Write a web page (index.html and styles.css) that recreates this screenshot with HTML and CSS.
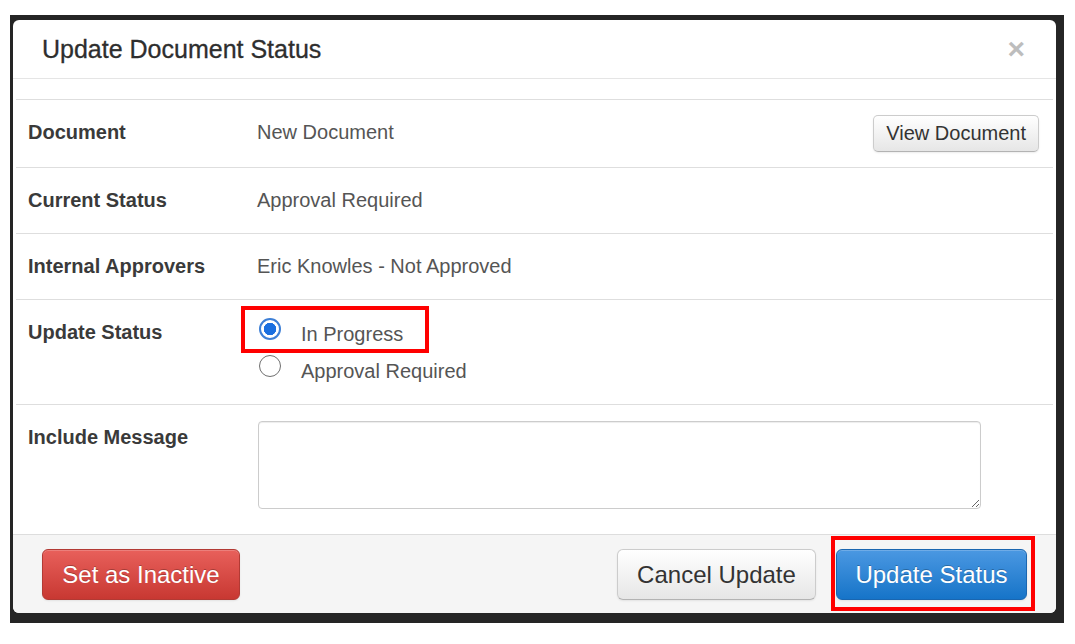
FILE: index.html
```html
<!DOCTYPE html>
<html lang="en">
<head>
<meta charset="utf-8">
<title>Update Document Status</title>
<link rel="stylesheet" href="styles.css">
</head>
<body>
<div class="frame">
  <div class="modal">
    <div class="modal-header">
      <h3 class="modal-title">Update Document Status</h3>
      <span class="close">&times;</span>
    </div>
    <div class="modal-body">
      <div class="row">
        <div class="label">Document</div>
        <div class="value">New Document</div>
        <button class="btn btn-view">View Document</button>
      </div>
      <div class="row">
        <div class="label">Current Status</div>
        <div class="value">Approval Required</div>
      </div>
      <div class="row">
        <div class="label">Internal Approvers</div>
        <div class="value">Eric Knowles - Not Approved</div>
      </div>
      <div class="row row-radio">
        <div class="label">Update Status</div>
        <div class="radios">
          <label class="radio highlight-radio"><input type="radio" name="status" checked><span>In Progress</span></label>
          <label class="radio"><input type="radio" name="status"><span>Approval Required</span></label>
        </div>
      </div>
      <div class="row">
        <div class="label">Include Message</div>
        <textarea class="message"></textarea>
      </div>
    </div>
    <div class="modal-footer">
      <button class="btn btn-large btn-danger">Set as Inactive</button>
      <button class="btn btn-large btn-default btn-cancel">Cancel Update</button>
      <div class="highlight-btn">
        <button class="btn btn-large btn-primary">Update Status</button>
      </div>
    </div>
  </div>
</div>
</body>
</html>
```

FILE: styles.css
```css
*, *::before, *::after { box-sizing: border-box; }

body {
  margin: 0;
  background: #fff;
  font-family: "Liberation Sans", Arial, sans-serif;
  font-size: 20px;
  color: #333;
}

.frame {
  width: 1054px;
  margin: 15px 0 0 10px;
  padding: 5px 8px 10px 3px;
  background: #252525;
}

.modal {
  width: 1043px;
  height: 593px;
  background: #fff;
  border-radius: 6px;
  overflow: hidden;
  display: flex;
  flex-direction: column;
}

.modal-header {
  height: 59px;
  flex: none;
  border-bottom: 1px solid #e5e5e5;
  display: flex;
  align-items: center;
  justify-content: space-between;
  padding: 0 31px 0 29px;
}

.modal-title {
  margin: 0;
  font-size: 25px;
  font-weight: normal;
  line-height: 30px;
  color: #2e2e2e;
  -webkit-text-stroke: 0.3px #2e2e2e;
}

.close {
  font-size: 30px;
  font-weight: bold;
  line-height: 1;
  color: #bdbdbd;
}

.modal-body {
  flex: 1;
  padding: 20px 3px 0;
}

.row {
  display: flex;
  align-items: flex-start;
  border-top: 1px solid #dedede;
  padding: 15px 14px 15px 12px;
}

.label {
  width: 229px;
  flex: none;
  font-weight: bold;
  line-height: 28px;
  margin: 3px 0 4px;
  color: #3a3a3a;
}

.value {
  flex: 1;
  line-height: 28px;
  margin: 3px 0 4px;
  color: #555;
}

.row-radio { padding-bottom: 15px; }

.radios {
  display: flex;
  flex-direction: column;
}

.radio {
  position: relative;
  display: flex;
  align-items: flex-start;
  height: 37px;
  color: #555;
}

.radio input {
  appearance: none;
  -webkit-appearance: none;
  width: 22px;
  height: 22px;
  margin: 3px 0 0 2px;
  border: 1.5px solid #6f6f6f;
  border-radius: 50%;
  background: #fff;
  flex: none;
}

.radio input:checked {
  border: 2px solid #3d7fd6;
  background: radial-gradient(circle, #1a6fe0 0 6px, #fff 6.5px);
}

.radio span {
  margin: 5px 0 0 20px;
  line-height: 28px;
}

.highlight-radio::after {
  content: "";
  position: absolute;
  left: -16px;
  top: -9px;
  width: 188px;
  height: 47px;
  border: 4px solid #f00;
}

.message {
  width: 723px;
  height: 88px;
  margin: 1px 0 0 1px;
  border: 1px solid #ccc;
  border-radius: 4px;
  box-shadow: inset 0 1px 1px rgba(0,0,0,.075);
  font-family: inherit;
  font-size: 20px;
  resize: both;
}

.btn {
  font-family: inherit;
  font-size: 20px;
  color: #333;
  white-space: nowrap;
  border-radius: 5px;
  border: 1px solid #ccc;
  border-bottom-color: #b3b3b3;
  background: linear-gradient(#ffffff, #e6e6e6);
  box-shadow: inset 0 1px 0 rgba(255,255,255,.2), 0 1px 2px rgba(0,0,0,.08);
  padding: 0 12px;
  cursor: pointer;
}

.btn-view {
  height: 37px;
  margin-left: auto;
  flex: none;
}

.modal-footer {
  height: 79px;
  flex: none;
  border-top: 1px solid #ddd;
  background: #f5f5f5;
  display: flex;
  align-items: flex-start;
  padding: 14px 29px 13px;
}

.btn-large {
  height: 51px;
  font-size: 24px;
  border-radius: 6px;
  padding: 0;
  flex: none;
}

.btn-danger {
  width: 198px;
  color: #fff;
  text-shadow: 0 -1px 0 rgba(0,0,0,.25);
  background: linear-gradient(#e8605b, #c83832);
  border: 1px solid #b23a34;
}

.btn-cancel {
  width: 199px;
  margin-left: auto;
  color: #333;
}

.highlight-btn {
  position: relative;
  margin-left: 20px;
  display: flex;
}

.btn-primary {
  width: 191px;
  color: #fff;
  text-shadow: 0 -1px 0 rgba(0,0,0,.25);
  background: linear-gradient(#4b98e2, #1674c8);
  border: 1px solid #1a66b0;
}

.highlight-btn::after {
  content: "";
  position: absolute;
  left: -5px;
  top: -13px;
  width: 204px;
  height: 75px;
  border: 4px solid #f00;
}
```
